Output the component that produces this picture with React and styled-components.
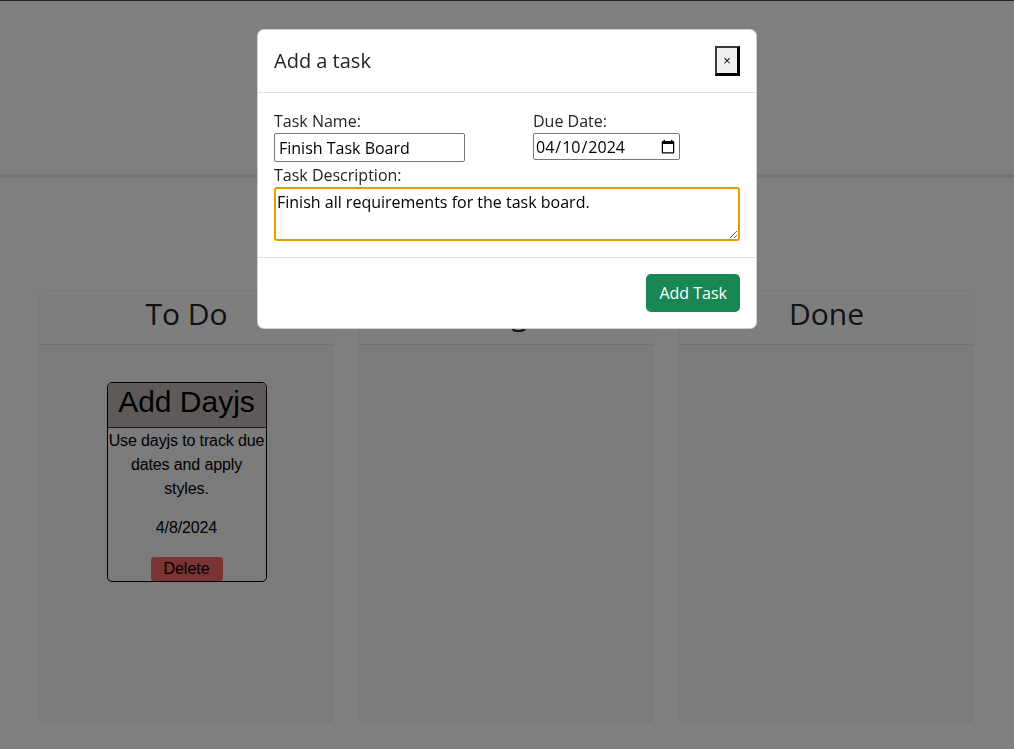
import React from 'react';
import styled, { createGlobalStyle } from 'styled-components';

const GlobalStyle = createGlobalStyle`
    html, body {
        margin: 0;
        padding: 0;
        background: #ffffff;
        font-family: "Open Sans", "Noto Sans", sans-serif;
        color: #212529;
    }
    * {
        box-sizing: border-box;
    }
`;

const Page = styled.div`
    min-height: 749px;
    border-top: 1px solid #444;
`;

const Header = styled.header`
    height: 177px;
    border-bottom: 4px solid #ececec;
`;

const Board = styled.main`
    display: flex;
    gap: 25px;
    padding: 112px 0 0 39px;
`;

const Column = styled.section`
    width: 295px;
    height: 433px;
    display: flex;
    flex-direction: column;
    background: #f7f7f7;
    border: 1px solid #f2f2f2;
    border-radius: 6px;
    overflow: hidden;
`;

const ColumnTitle = styled.h2`
    margin: 0;
    padding: 5px 0 12px;
    font-size: 30px;
    font-weight: 400;
    line-height: 36px;
    text-align: center;
    color: #212529;
    background: #fdfdfd;
    border-bottom: 1px solid #e2e2e2;
`;

const ColumnBody = styled.div`
    flex: 1;
    display: flex;
    flex-direction: column;
    align-items: center;
    padding-top: 37px;
`;

const TaskCard = styled.article`
    width: 160px;
    border: 1px solid #000;
    border-radius: 5px;
    overflow: hidden;
    font-family: "Liberation Sans", Arial, sans-serif;
    color: #000;
    text-align: center;
    display: flex;
    flex-direction: column;
    align-items: center;
`;

const TaskTitle = styled.h3`
    align-self: stretch;
    margin: 0;
    height: 45px;
    font-size: 30px;
    font-weight: 400;
    line-height: 38px;
    background: #bcb4b4;
    border-bottom: 1px solid #333;
`;

const TaskText = styled.p`
    margin: ${(p) => (p.$spaced ? '15px 0 17px' : '1px 0 0')};
    font-size: 16px;
    line-height: 24px;
    letter-spacing: -0.12px;
`;

const DeleteButton = styled.button`
    width: 72px;
    height: 24px;
    padding: 0;
    border: none;
    border-radius: 3px;
    background: #f46868;
    color: #000;
    font-family: "Liberation Sans", Arial, sans-serif;
    font-size: 16px;
`;

const Backdrop = styled.div`
    position: fixed;
    inset: 0;
    background: rgba(0, 0, 0, 0.5);
`;

const Modal = styled.div`
    position: fixed;
    top: 29px;
    left: 257px;
    width: 500px;
    background: #fff;
    border: 1px solid rgba(0, 0, 0, 0.18);
    border-radius: 7px;
`;

const ModalHeader = styled.div`
    display: flex;
    align-items: center;
    justify-content: space-between;
    padding: 16px;
    border-bottom: 1px solid #dee2e6;
`;

const ModalTitle = styled.h5`
    margin: 0;
    font-size: 20px;
    font-weight: 400;
    line-height: 30px;
`;

const CloseButton = styled.button`
    width: 25px;
    height: 30px;
    padding: 0;
    background: #efefef;
    border: 2px solid #3a3a3a;
    border-right: 3px solid #000;
    border-bottom: 3px solid #000;
    font-family: "Liberation Sans", Arial, sans-serif;
    font-size: 13px;
    color: #000;
`;

const ModalBody = styled.div`
    padding: 16px;
`;

const FieldRow = styled.div`
    display: grid;
    grid-template-columns: 259px 1fr;
    padding-bottom: 1px;
`;

const Field = styled.div`
    display: flex;
    flex-direction: column;
    align-items: flex-start;
`;

const Label = styled.label`
    font-size: 16px;
    line-height: 24px;
`;

const TextInput = styled.input`
    width: ${(p) => p.$width};
    height: ${(p) => p.$height};
    padding: 1px ${(p) => p.$padX || '4px'};
    border: 1px solid #767676;
    border-radius: 2px;
    font-family: "Open Sans", sans-serif;
    font-size: 16px;
    color: #000;
    background: #fff;
`;

const TextArea = styled.textarea`
    display: block;
    width: 100%;
    height: 54px;
    padding: 2px 1px;
    border: 2px solid #e59c00;
    border-radius: 3px;
    outline: none;
    font-family: "Open Sans", sans-serif;
    font-size: 16px;
    line-height: 22px;
    color: #000;
    resize: vertical;
`;

const ModalFooter = styled.div`
    display: flex;
    justify-content: flex-end;
    padding: 16px;
    border-top: 1px solid #dee2e6;
`;

const SuccessButton = styled.button`
    height: 38px;
    padding: 0 13px;
    border: none;
    border-radius: 5px;
    background: #198754;
    color: #fff;
    font-family: "Open Sans", sans-serif;
    font-size: 16px;
`;

const columns = [
    {
        title: 'To Do',
        tasks: [
            {
                id: 1,
                name: 'Add Dayjs',
                description: 'Use dayjs to track due dates and apply styles.',
                date: '4/8/2024'
            }
        ]
    },
    { title: 'In Progress', tasks: [] },
    { title: 'Done', tasks: [] }
];

function App() {
    return (
        <Page>
            <GlobalStyle />
            <Header />
            <Board>
                {columns.map((column) => (
                    <Column key={column.title}>
                        <ColumnTitle>{column.title}</ColumnTitle>
                        <ColumnBody>
                            {column.tasks.map((task) => (
                                <TaskCard key={task.id}>
                                    <TaskTitle>{task.name}</TaskTitle>
                                    <TaskText>{task.description}</TaskText>
                                    <TaskText $spaced>{task.date}</TaskText>
                                    <DeleteButton>Delete</DeleteButton>
                                </TaskCard>
                            ))}
                        </ColumnBody>
                    </Column>
                ))}
            </Board>

            <Backdrop />
            <Modal>
                <ModalHeader>
                    <ModalTitle>Add a task</ModalTitle>
                    <CloseButton>×</CloseButton>
                </ModalHeader>
                <ModalBody>
                    <FieldRow>
                        <Field>
                            <Label>Task Name:</Label>
                            <TextInput $width="191px" $height="29px" defaultValue="Finish Task Board" />
                        </Field>
                        <Field>
                            <Label>Due Date:</Label>
                            <TextInput type="date" $width="147px" $height="27px" $padX="1px" defaultValue="2024-04-10" />
                        </Field>
                    </FieldRow>
                    <Label>Task Description:</Label>
                    <TextArea defaultValue="Finish all requirements for the task board." />
                </ModalBody>
                <ModalFooter>
                    <SuccessButton>Add Task</SuccessButton>
                </ModalFooter>
            </Modal>
        </Page>
    );
}

export default App;
